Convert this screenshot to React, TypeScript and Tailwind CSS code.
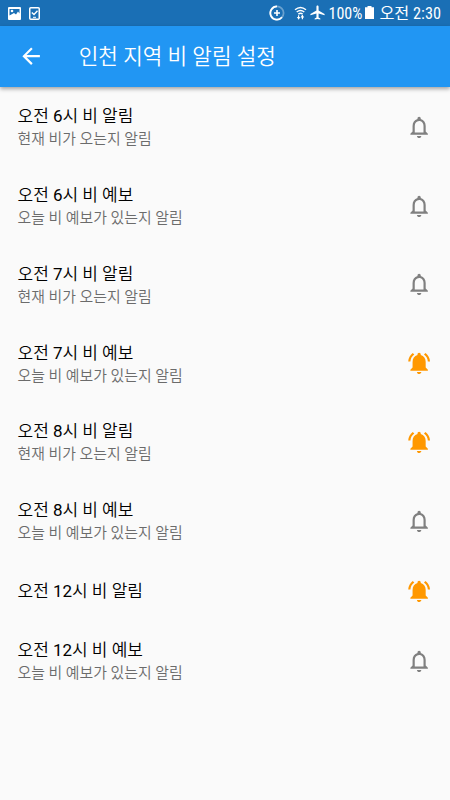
import React from 'react';
import {
  MdAirplanemodeActive,
  MdArrowBack,
  MdNotificationsActive,
  MdNotificationsNone,
} from 'react-icons/md';

interface Alarm {
  hour: number;
  label: string;
  subtitle?: string;
  active: boolean;
}

const RAIN_NOW = '현재 비가 오는지 알림';
const RAIN_FORECAST = '오늘 비 예보가 있는지 알림';

const alarms: Alarm[] = [
  { hour: 6, label: '비 알림', subtitle: RAIN_NOW, active: false },
  { hour: 6, label: '비 예보', subtitle: RAIN_FORECAST, active: false },
  { hour: 7, label: '비 알림', subtitle: RAIN_NOW, active: false },
  { hour: 7, label: '비 예보', subtitle: RAIN_FORECAST, active: true },
  { hour: 8, label: '비 알림', subtitle: RAIN_NOW, active: true },
  { hour: 8, label: '비 예보', subtitle: RAIN_FORECAST, active: false },
  { hour: 12, label: '비 알림', active: true },
  { hour: 12, label: '비 예보', subtitle: RAIN_FORECAST, active: false },
];

function StatusBar() {
  return (
    <div className="flex h-[26px] items-center justify-between bg-[#1a6fb5] pl-2 pr-[9px] font-['Roboto_Condensed','Roboto','Noto_Sans_CJK_KR',sans-serif] text-white">
      <div className="flex items-center gap-2">
        {/* gallery */}
        <svg width="13" height="13" viewBox="0 0 13 13">
          <rect width="13" height="13" rx="1" fill="#fff" />
          <path d="M1.5 2h10v4.5l-1.5-2-2 3-2-1.5-4.5 2.5z" fill="#1a6fb5" />
          <circle cx="4" cy="4" r="1.3" fill="#fff" />
        </svg>
        {/* device check */}
        <svg width="11" height="13" viewBox="0 0 11 13" fill="none" stroke="#fff">
          <rect x="0.75" y="0.75" width="9.5" height="11.5" rx="1" strokeWidth="1.5" />
          <path d="M2.8 5.5 5 7.5 8.5 3.7" strokeWidth="1.4" />
          <path d="M4 10.3h3" strokeWidth="1" />
        </svg>
      </div>
      <div className="flex items-center">
        {/* data saver */}
        <svg className="mr-[9px]" width="16" height="16" viewBox="0 0 16 16" fill="none" stroke="#fff">
          <circle cx="8" cy="8" r="6.6" strokeWidth="1.8" strokeOpacity="0.35" />
          <path d="M8 1.4A6.6 6.6 0 1 0 13 12.2" strokeWidth="1.8" />
          <path d="M8 5v6M5 8h6" strokeWidth="1.6" />
        </svg>
        {/* wifi */}
        <svg className="mr-[2px]" width="13" height="14" viewBox="0 0 13 14" fill="none" stroke="#fff">
          <path
            d="M1 3.8Q6.5-1 12 3.8M2.7 6Q6.5 2.8 10.3 6M4.4 8.1Q6.5 6.4 8.6 8.1"
            strokeWidth="1.4"
          />
          <path d="M4.6 9.2v4M8.4 9.2v4" strokeWidth="1.2" />
          <path d="M2.8 11h3.6l-1.8 2.6zM6.6 11.4h3.6L8.4 8.8z" fill="#fff" stroke="none" />
        </svg>
        <MdAirplanemodeActive size={17} className="mr-[3px]" />
        <span className="mr-[3px] pt-[2px] text-[16px] leading-none">100%</span>
        <svg className="mr-[5px]" width="9" height="13" viewBox="0 0 9 13" fill="#fff">
          <path d="M2.5 0h4v1.3H9V13H0V1.3h2.5z" />
        </svg>
        <span className="pt-[2px] text-[16.3px] leading-none">오전 2:30</span>
      </div>
    </div>
  );
}

function AppBar() {
  return (
    <header className="relative flex h-[61px] items-center bg-[#2196f3] pl-[17.5px] text-white shadow-[0_2px_4px_rgba(0,0,0,0.35)]">
      <MdArrowBack size={26.25} />
      <h1 className="ml-[35px] pt-px text-[21.3px] font-[350] leading-none">인천 지역 비 알림 설정</h1>
    </header>
  );
}

function AlarmRow({ hour, label, subtitle, active }: Alarm) {
  return (
    <li
      className={`flex items-center justify-between px-[17.5px] ${subtitle ? 'h-[78.75px]' : 'h-[61.25px]'}`}
    >
      <div className={subtitle ? 'pt-px' : ''}>
        <p className="text-[17px] font-[350] leading-[24px] text-black">
          오전 <span className="font-normal">{hour}</span>시 {label}
        </p>
        {subtitle && (
          <p className="text-[14.9px] font-[350] leading-[22px] text-[#6b6b6b]">{subtitle}</p>
        )}
      </div>
      {active ? (
        <MdNotificationsActive size={26.25} className="text-[#ff9800]" />
      ) : (
        <MdNotificationsNone size={26.25} className="text-[#808080]" />
      )}
    </li>
  );
}

export default function App() {
  return (
    <div className="h-[800px] w-[450px] overflow-hidden bg-[#fafafa] font-['Roboto','Noto_Sans_CJK_KR',sans-serif]">
      <StatusBar />
      <AppBar />
      <ul className="pt-[0.5px]">
        {alarms.map((alarm) => (
          <AlarmRow key={`${alarm.hour}-${alarm.label}`} {...alarm} />
        ))}
      </ul>
    </div>
  );
}
